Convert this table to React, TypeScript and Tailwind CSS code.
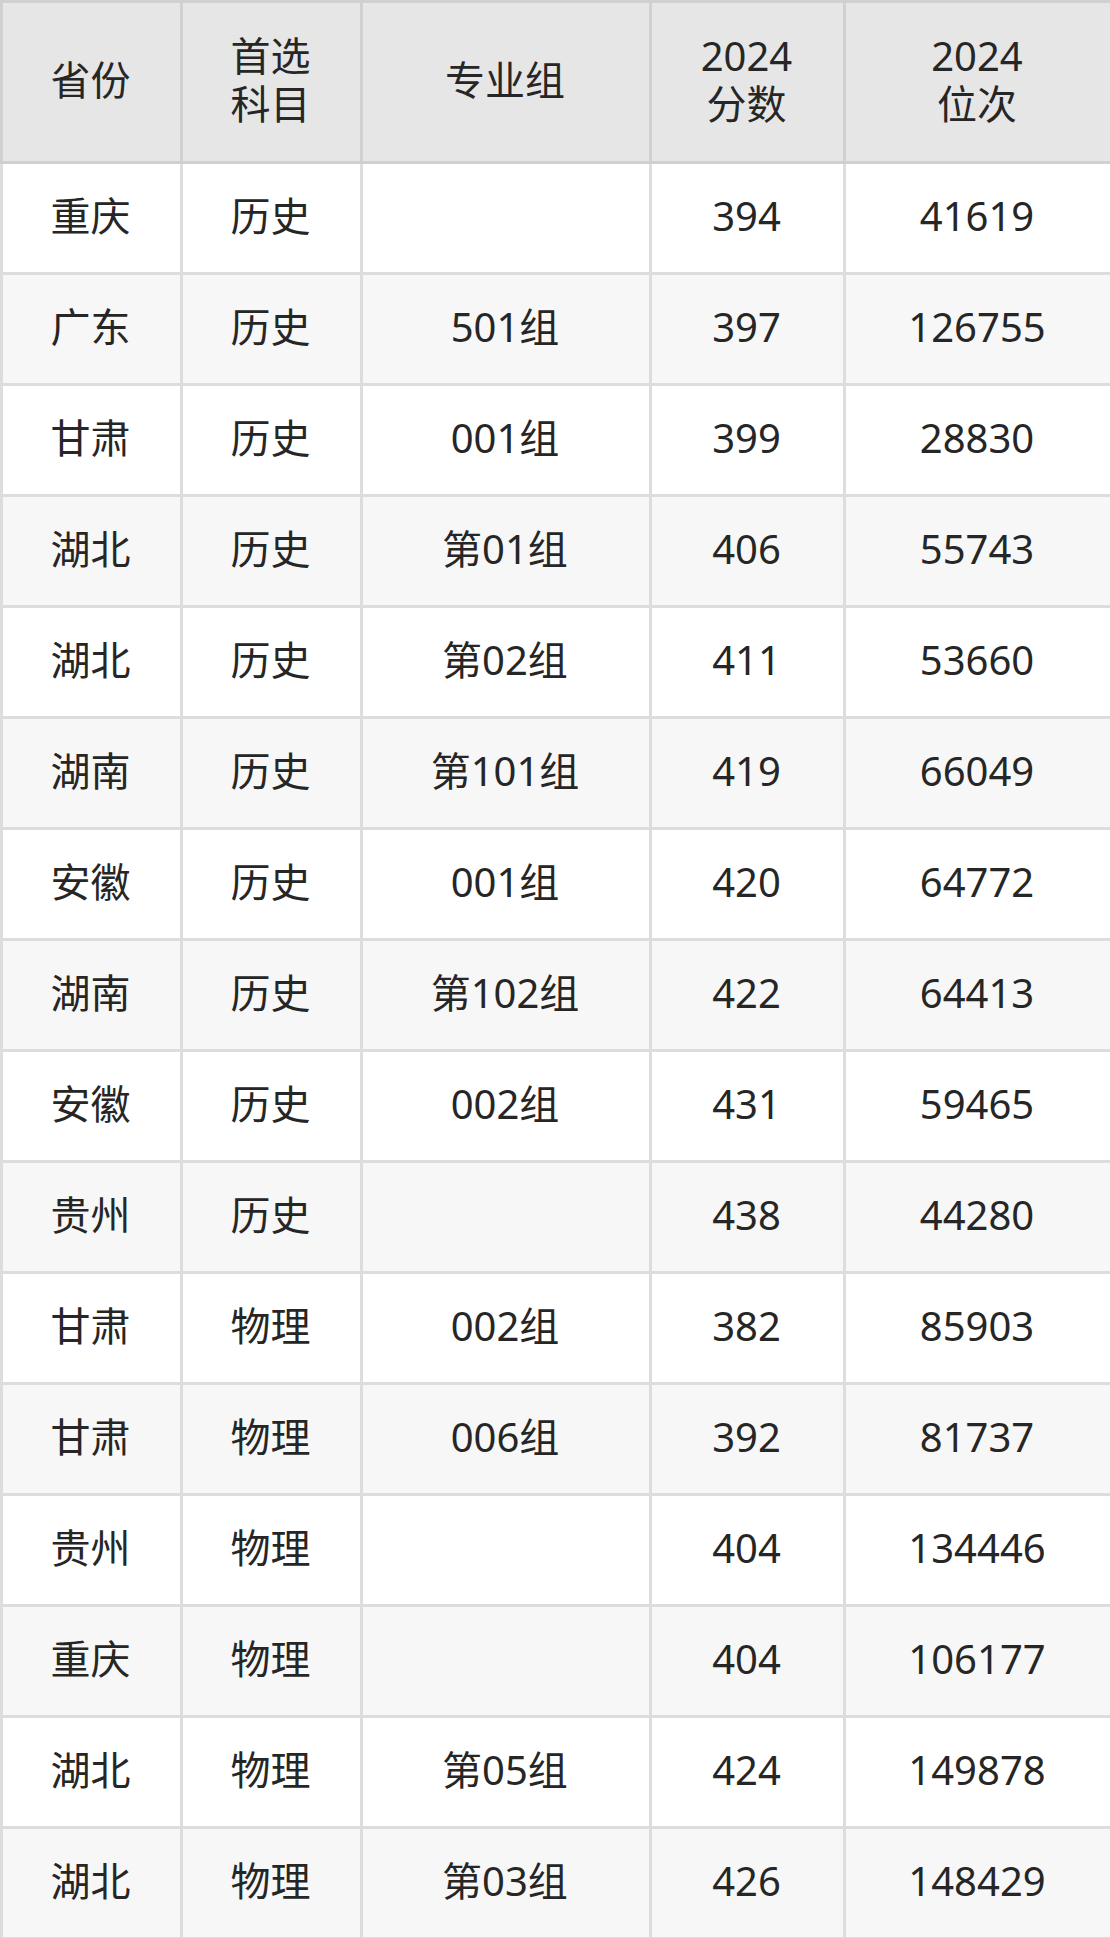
const ROWS: [string, string, string, string, string][] = [
  ['重庆', '历史', '', '394', '41619'],
  ['广东', '历史', '501组', '397', '126755'],
  ['甘肃', '历史', '001组', '399', '28830'],
  ['湖北', '历史', '第01组', '406', '55743'],
  ['湖北', '历史', '第02组', '411', '53660'],
  ['湖南', '历史', '第101组', '419', '66049'],
  ['安徽', '历史', '001组', '420', '64772'],
  ['湖南', '历史', '第102组', '422', '64413'],
  ['安徽', '历史', '002组', '431', '59465'],
  ['贵州', '历史', '', '438', '44280'],
  ['甘肃', '物理', '002组', '382', '85903'],
  ['甘肃', '物理', '006组', '392', '81737'],
  ['贵州', '物理', '', '404', '134446'],
  ['重庆', '物理', '', '404', '106177'],
  ['湖北', '物理', '第05组', '424', '149878'],
  ['湖北', '物理', '第03组', '426', '148429'],
]

export default function App() {
  return (
    <div className="w-[1110px] bg-white font-['Noto_Sans','Noto_Sans_CJK_SC',sans-serif] text-[#262626]">
      <table className="w-full table-fixed border-collapse border-[3px] border-[#d4d4d4] text-center text-[40px]">
        <colgroup>
          <col className="w-[180px]" />
          <col className="w-[180px]" />
          <col className="w-[289px]" />
          <col className="w-[194px]" />
          <col className="w-[267px]" />
        </colgroup>
        <thead>
          <tr className="h-[161px] bg-[#e6e6e6] leading-[48px]">
            <HeadCell>省份</HeadCell>
            <HeadCell>首选<br />科目</HeadCell>
            <HeadCell>专业组</HeadCell>
            <HeadCell>2024<br />分数</HeadCell>
            <HeadCell>2024<br />位次</HeadCell>
          </tr>
        </thead>
        <tbody>
          {ROWS.map((r, i) => (
            <tr key={i} className={i % 2 === 0 ? 'h-[111px] bg-white' : 'h-[111px] bg-[#f7f7f7]'}>
              {r.map((c, j) => (
                <td key={j} className="border-[3px] border-[#dddddd] p-0 pr-[2px] pb-[5px] align-middle">
                  {c}
                </td>
              ))}
            </tr>
          ))}
        </tbody>
      </table>
    </div>
  )
}

function HeadCell({ children }: { children: React.ReactNode }) {
  return (
    <th className="border-[3px] border-[#d0d0d0] p-0 pr-[2px] pb-[5px] align-middle font-normal">{children}</th>
  )
}
